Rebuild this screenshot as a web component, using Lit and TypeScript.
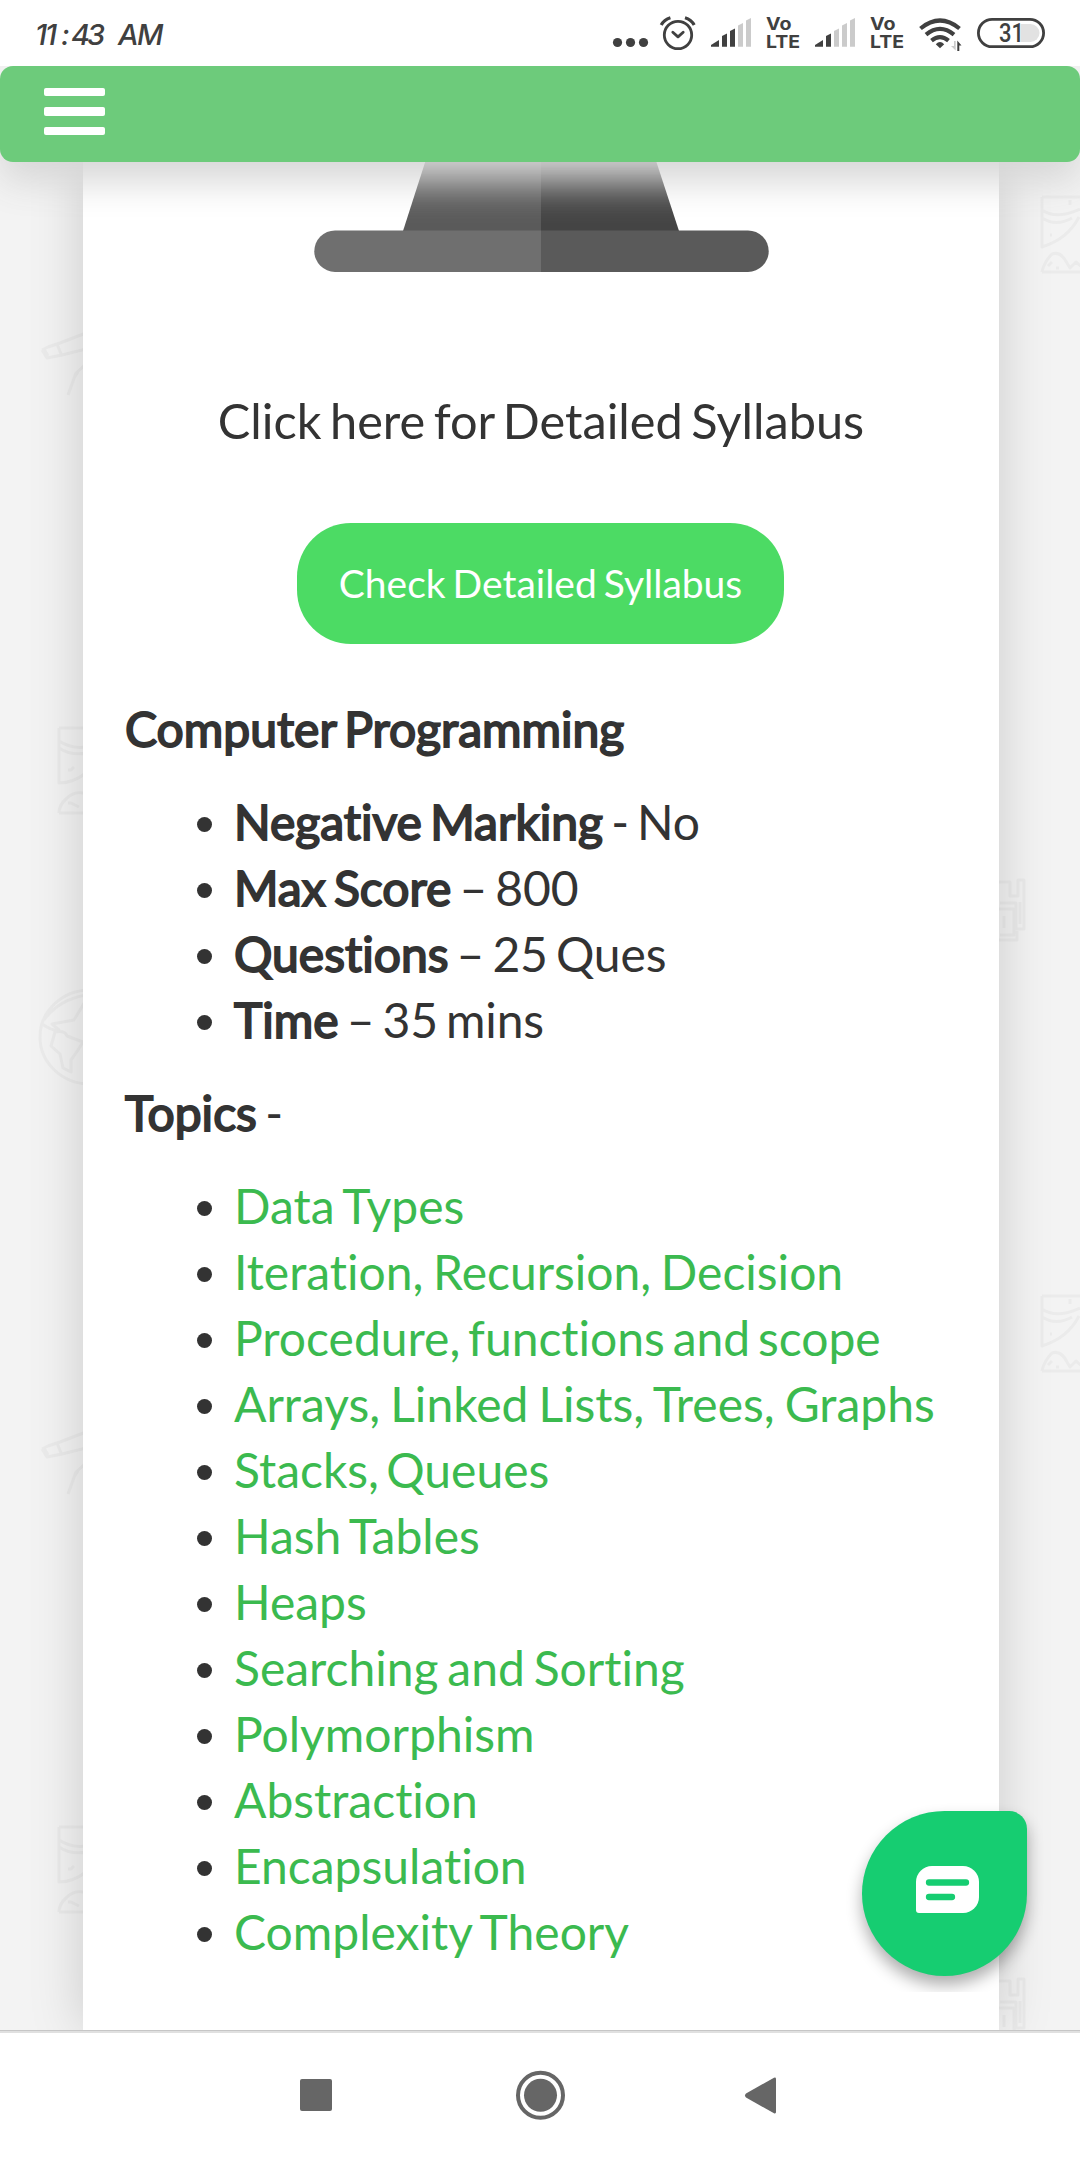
import { LitElement, html, css, svg } from "lit";
import { customElement, property } from "lit/decorators.js";
import { styleMap } from "lit/directives/style-map.js";

const INK = "#404040";
const FAINT = "#cbcbcb";

@customElement("status-bar")
class StatusBar extends LitElement {
  static styles = css`
    :host { display: flex; align-items: flex-start; height: 66px; background: #fff; }
    svg { display: block; flex: none; }
    .time { margin-left: 30px; }
    .icons { display: flex; margin-left: auto; margin-right: 33px; }
    .clock { font: italic 500 29px Inter, "Liberation Sans", sans-serif; }
    .volte { font: 700 17.5px Inter, sans-serif; }
    .level { font: 500 25px Roboto, sans-serif; }
  `;

  signal(strength: number) {
    const bars = [
      "0,46.8 0,45 8,40 8,46.8",
      "11,46.8 11,36 16,33.5 16,46.8",
      "19,46.8 19,31 24,28.5 24,46.8",
      "27,46.8 27,25.5 32,23 32,46.8",
      "35,46.8 35,20.5 40,18 40,46.8",
    ];
    return html`<svg width="55" height="66" viewBox="0 0 55 66">
      ${bars.map((p, i) => svg`<polygon points=${p} fill=${i < strength ? INK : FAINT}/>`)}
    </svg>`;
  }

  volte() {
    return html`<svg class="volte" width="49" height="66" viewBox="0 0 49 66" fill=${INK}>
      <text x="0" y="30.3" textLength="25.5" lengthAdjust="spacingAndGlyphs">Vo</text>
      <text x="0" y="47.7" textLength="34" lengthAdjust="spacingAndGlyphs">LTE</text>
    </svg>`;
  }

  render() {
    return html`
      <svg class="time" width="160" height="66" viewBox="30 0 160 66">
        <text class="clock" fill=${INK} y="44.500" x="35 45 61 71 87 104 118 137">11:43 AM</text>
      </svg>
      <div class="icons">
        <svg width="47" height="66" viewBox="612 0 47 66" fill=${INK}>
          <circle cx="617.5" cy="42.5" r="4.6"/><circle cx="630.5" cy="42.5" r="4.6"/><circle cx="643.5" cy="42.5" r="4.6"/>
        </svg>
        <svg width="52" height="66" viewBox="659 0 52 66" fill="none" stroke=${INK} stroke-width="2.8" stroke-linecap="round" stroke-linejoin="round">
          <circle cx="678" cy="35" r="13.7"/>
          <path d="M672.8 32.3l5.2 4.6 5.2-4.6"/>
          <path stroke-width="3.2" stroke-linecap="butt" d="M661.2 25q3-5.500 9.200-7.300M694.200 25q-3-5.500-9.200-7.300"/>
        </svg>
        ${this.signal(3)}
        ${this.volte()}
        ${this.signal(2)}
        ${this.volte()}
        <svg width="58" height="66" viewBox="919 0 58 66" fill="none" stroke=${INK} stroke-width="4.200">
          <path d="M920.500 28.500q19.500-16 39 0M926 34.700q14-11.500 28 0M931.500 40.700q8.500-7 17 0"/>
          <path stroke="none" fill=${INK} d="M935.800 44.200q4.200-4.500 8.400 0l-4.200 4z"/>
          <path stroke="none" fill=${FAINT} d="M955.700 41v9.500l-4.700-4.500h3v-5z"/>
          <path stroke="none" fill=${INK} d="M957.300 51V40.500l4.200 5h-2.200v5.500z"/>
        </svg>
        <svg width="70" height="66" viewBox="977 0 70 66">
          <path d="M1020.500 24h10a9 9 0 0 1 0 18h-10z" fill="#e2e2e2"/>
          <rect x="978.400" y="19.300" width="65.200" height="27.400" rx="13.700" fill="none" stroke=${INK} stroke-width="2.800"/>
          <text class="level" x="999" y="42" textLength="25" lengthAdjust="spacingAndGlyphs" fill=${INK}>31</text>
        </svg>
      </div>
    `;
  }
}

@customElement("doodle-backdrop")
class DoodleBackdrop extends LitElement {
  static styles = css`
    :host { display: block; overflow: hidden; background: #f3f3f3; }
    svg { display: block; }
  `;

  // One repeat of the wallpaper, shifted down by dy.
  tile(dy: number) {
    return svg`<g transform="translate(0 ${dy})">
      <path d="M42 350l5 8 15-3 24-6M42 350l6-3 12-4 26-10M44 349l4 7M57 344l4 10M68 395l8-22 9-8M74 378l4-6"/>
      <path d="M59 728h30M59 728v55q14 0 27-10M59 741q12 8 27 6M59 748q12 8 27 5M68 770h3l3-3M59 813h30M59 813q0-8 8-15 8-8 20-4M68 803h3l8 4"/>
      <path d="M90 990a50 47 0 1 0 0 94M42 1024q12 8 17 6l-7-6 22-4 12-20M55 1032q10-2 12 4l16 6q-6 10-12 18v12l-8-4-3-14-9-8zM44 1020q14-20 42-25"/>
      <path d="M1042 197h40M1042 197v50q26-8 37-30M1042 210q14 10 38-1M1042 218q14 9 30 0M1050 235h2M1070 200v5M1042 272h40M1042 272q2-10 10-18 9-3 15 9l3 5 6-6 6 5M1048 266l4-4M1056 268h3"/>
      <path d="M998 882h12v14h8v-16h6v49h-8v-26h-16M998 909h16v26h-14M1004 916v12M1018 884v12M998 940h19v-9M1020 902v22"/>
    </g>`;
  }

  render() {
    return html`<svg width="1080" height="1964" viewBox="0 66 1080 1964" fill="none" stroke="#ebebeb" stroke-width="3" stroke-linejoin="round">
      ${this.tile(0)}${this.tile(1099)}
    </svg>`;
  }
}

@customElement("top-nav")
class TopNav extends LitElement {
  static styles = css`
    :host { display: flex; flex-direction: column; gap: 11px; box-sizing: border-box; height: 96px; padding: 22px 44px; border-radius: 13px; background: #6dcb7b; box-shadow: 0 20px 37px #d7d7d7; }
    .bar { width: 61px; height: 8.4px; border-radius: 2px; background: #fff; }
  `;
  render() {
    return html`<div class="bar"></div><div class="bar"></div><div class="bar"></div>`;
  }
}

@customElement("bullet-list")
class BulletList extends LitElement {
  @property({ attribute: false }) items: unknown[] = [];
  static styles = css`
    ul { list-style: none; margin: 0 0 27px; padding: 0 0 0 72px; }
    li { display: flex; align-items: center; height: 66px; white-space: pre; }
    li::before { content: ""; flex: none; width: 15px; height: 15px; margin: 4px 22px 0 0; border-radius: 50%; background: #333; }
    .term { -webkit-text-stroke: 1.9px currentColor; }
    .rest { letter-spacing: -0.15px; }
    .link { color: #3bba4f; }
  `;
  render() {
    return html`<ul>${this.items.map((i) => html`<li><div>${i}</div></li>`)}</ul>`;
  }
}

const facts = [
  ["Negative Marking", " - No"],
  ["Max Score", " – 800"],
  ["Questions", " – 25 Ques"],
  ["Time", " – 35 mins"],
];

// Topic label and its word spacing in pixels.
const topics: [string, number][] = [
  ["Data Types", -3],
  ["Iteration, Recursion, Decision", -2.6],
  ["Procedure, functions and scope", -4.5],
  ["Arrays, Linked Lists, Trees, Graphs", -2.3],
  ["Stacks, Queues", -5],
  ["Hash Tables", -3.5],
  ["Heaps", -4],
  ["Searching and Sorting", -3.5],
  ["Polymorphism", -4],
  ["Abstraction", -4],
  ["Encapsulation", -4],
  ["Complexity Theory", -3],
];

@customElement("app-root")
class AppRoot extends LitElement {
  static styles = css`
    :host { display: flex; flex-direction: column; width: 1080px; height: 2160px; overflow: hidden; background: #fff; color: #333; font: 400 48px/66px Lato, sans-serif; font-variant-ligatures: none; word-spacing: -4px; }
    .page { display: grid; grid-template: 1964px / 1080px; height: 1964px; overflow: hidden; position: relative; }
    .page > .layer { grid-area: 1 / 1; }
    .top { align-self: start; z-index: 2; }
    .card { justify-self: center; box-sizing: border-box; width: 916px; margin-left: 2px; padding: 0 42px; background: #fff; box-shadow: 0 0 50px rgba(0, 0, 0, 0.17); }
    .art { display: block; margin: 0 auto; }
    .lead { margin: 114px 0 0; text-align: center; font-size: 48.7px; }
    .cta { display: flex; align-items: center; justify-content: center; width: 487px; height: 121px; padding: 0 0 2px; margin: 70px auto 52px 172px; border: 0; border-radius: 54px; background: #4cdb64; color: #fff; font: 400 39px/50px Lato, sans-serif; word-spacing: -3px; }
    .heading { margin: 0 0 27px; }
    .strong { -webkit-text-stroke: 1.9px currentColor; }
    .chat-clip { position: absolute; right: 20px; bottom: 38px; width: 230px; height: 210px; overflow: hidden; z-index: 3; }
    .chat { position: absolute; right: 33px; bottom: 16px; display: flex; align-items: center; justify-content: center; box-sizing: border-box; width: 165px; height: 165px; padding: 0 0 8px 6px; border-radius: 83px 18px 83px 83px; background: #16cd71; box-shadow: 0 9px 16px rgba(0, 0, 0, 0.32); }
    .system { display: block; box-sizing: border-box; height: 130px; border-top: 1px solid #c6c6c6; box-shadow: inset 0 2px #e0e0e0; background: #fff; }
  `;

  render() {
    return html`
      <status-bar></status-bar>
      <main class="page">
        <doodle-backdrop class="layer"></doodle-backdrop>
        <section class="layer card">
          <svg class="art" width="460" height="207" viewBox="311 66 460 207">
            <path d="M456 66h85v165H403z" fill="#5a5a5a"/>
            <path d="M541 66h84l54 165H541z" fill="#444"/>
            <path d="M541 230.500H335a20.700 20.700 0 0 0 0 41.400h206z" fill="#6f6f6f"/>
            <path d="M541 230.500h207a20.700 20.700 0 0 1 0 41.400H541z" fill="#5a5a5a"/>
          </svg>
          <p class="lead">Click here for Detailed Syllabus</p>
          <button class="cta">Check Detailed Syllabus</button>
          <p class="heading"><span class="strong">Computer Programming</span></p>
          <bullet-list .items=${facts.map(([term, rest]) => html`<span class="term">${term}</span><span class="rest">${rest}</span>`)}></bullet-list>
          <p class="heading"><span class="strong">Topics</span> -</p>
          <bullet-list .items=${topics.map(([t, ws]) => html`<span class="link" style=${styleMap({ wordSpacing: `${ws}px` })}>${t}</span>`)}></bullet-list>
        </section>
        <top-nav class="layer top"></top-nav>
        <div class="chat-clip">
          <div class="chat">
            <svg width="63" height="47" viewBox="0 0 63 47">
              <path d="M16 0h31a16 16 0 0 1 16 16v15a16 16 0 0 1-16 16H3a3 3 0 0 1-3-3V16A16 16 0 0 1 16 0z" fill="#fff"/>
              <path d="M13 16.500h37M13 31h23" stroke="#16cd71" stroke-width="6.300" stroke-linecap="round"/>
            </svg>
          </div>
        </div>
      </main>
      <footer class="system">
        <svg width="1080" height="129" viewBox="0 2031 1080 129" fill="#666">
          <rect x="300" y="2079" width="32" height="32" rx="2"/>
          <circle cx="540.500" cy="2095.300" r="22.500" fill="none" stroke="#666" stroke-width="4"/>
          <circle cx="540.500" cy="2095.300" r="16.500"/>
          <path d="M746 2093.500l28-15.800q2-.7 2 1.300v33q0 2-2 1.300l-28-15.800q-2-2 0-4z"/>
        </svg>
      </footer>
    `;
  }
}
